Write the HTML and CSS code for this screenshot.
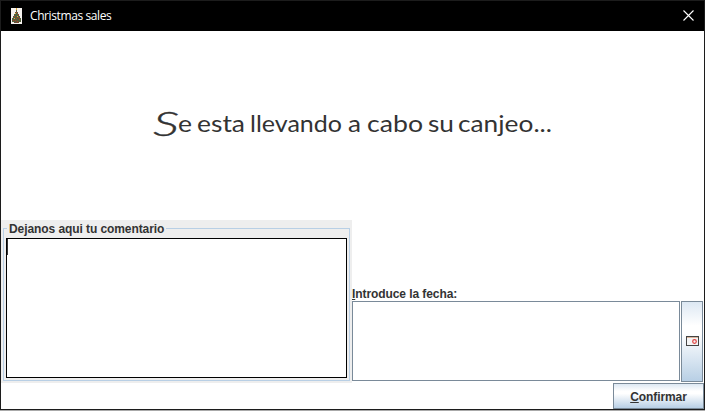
FILE: index.html
```html
<!DOCTYPE html>
<html lang="es">
<head>
<meta charset="utf-8">
<title>Christmas sales</title>
<link rel="stylesheet" href="styles.css">
</head>
<body>
<main class="window">
  <header class="titlebar">
    <svg class="tree" width="11" height="16" viewBox="0 0 11 16" shape-rendering="crispEdges">
      <path fill="#f6f3ef" d="M0 0h11v16H0z"/>
      <path fill="#53613d" d="M5 2h1v2h1v2h1v2h1v2h1v4H1v-4h1V8h1V6h1V4h1z"/>
      <path fill="#e3a83a" d="M5 0h1v2H5zM4 5h1v1H4zM6 8h1v1H6zM3 10h1v1H3z"/>
      <path fill="#b5362b" d="M5 4h1v1H5zM3 8h1v1H3zM7 6h1v1H7zM5 10h1v1H5zM8 11h1v1H8zM2 12h1v1H2zM6 13h1v1H6zM4 12h1v1H4zM7 9h1v1H7z"/>
      <path fill="#6c4a35" d="M3 14h5v1H3z"/>
    </svg>
    <span class="title">Christmas sales</span>
    <svg class="close" width="11" height="11" viewBox="0 0 11 11"><path d="M.5.5l10 10M10.5.5l-10 10" stroke="#fff" stroke-width="1.1"/></svg>
  </header>
  <section class="message">
    <svg width="703" height="189" viewBox="0 0 703 189">
      <text class="script" y="101"><tspan class="cap" x="152" y="105" textLength="26" lengthAdjust="spacingAndGlyphs">S</tspan><tspan x="177" y="101" textLength="14" lengthAdjust="spacingAndGlyphs">e</tspan> <tspan x="196" textLength="48" lengthAdjust="spacingAndGlyphs">esta</tspan> <tspan x="249" textLength="92" lengthAdjust="spacingAndGlyphs">llevando</tspan> <tspan x="347" textLength="13" lengthAdjust="spacingAndGlyphs">a</tspan> <tspan x="366" textLength="56" lengthAdjust="spacingAndGlyphs">cabo</tspan> <tspan x="427" textLength="26" lengthAdjust="spacingAndGlyphs">su</tspan> <tspan x="457" textLength="94" lengthAdjust="spacingAndGlyphs">canjeo...</tspan></text>
    </svg>
  </section>
  <section class="form">
    <fieldset class="comment">
      <legend>Dejanos aqui tu comentario</legend>
      <div class="textarea"><i class="caret"></i></div>
    </fieldset>
    <div class="date">
      <div class="label"><u>I</u>ntroduce la fecha:</div>
      <div class="picker">
        <div class="field"></div>
        <div class="pick">
          <svg width="13" height="10" viewBox="0 0 13 10">
            <path fill="#444" d="M0 0h13v10H0z"/><path fill="#f4f4f4" d="M1 2h11v7H1z"/><path fill="#d9b59d" d="M1 1h11v1H1z"/>
            <circle cx="8.5" cy="5.5" r="1.8" fill="none" stroke="#e04040" stroke-width="1.2"/>
          </svg>
        </div>
      </div>
    </div>
  </section>
  <footer class="actions"><div class="confirm"><span><u>C</u>onfirmar</span></div></footer>
</main>
</body>
</html>
```

FILE: styles.css
```css
* { box-sizing: border-box; }
body {
  margin: 0;
  width: 705px;
  height: 411px;
  overflow: hidden;
  background: #aaa;
  font: bold 12px/15px "Liberation Sans", Arial, sans-serif;
  letter-spacing: -0.08px;
  color: #333;
}
.window {
  width: 705px;
  height: 410px;
  border: 1px solid #1c1c1c;
  background: #fff;
  display: flex;
  flex-direction: column;
}
.titlebar {
  height: 30px;
  flex: none;
  background: #000;
  display: flex;
  align-items: center;
  padding: 0 10px;
}
.tree { margin-top: -1px; }
.title {
  color: #fff;
  font: 12px/16px "Open Sans", sans-serif;
  letter-spacing: -0.4px;
  margin-left: 8px;
}
.close { margin: -2px 0 0 auto; }
.message { height: 189px; flex: none; }
.message svg { display: block; }
.script {
  font: 22.5px Lato, sans-serif;
  letter-spacing: 0;
  fill: #333;
}
.cap { font-size: 33px; font-weight: 300; font-style: italic; stroke: #333; stroke-width: .4px; }
.form { display: flex; height: 163px; flex: none; }
.comment {
  width: 351px;
  height: 163px;
  margin: 0;
  padding: 0;
  border: 0 solid #eee;
  background: #eee;
  display: grid;
  position: relative;
}
.comment::before {
  content: "";
  position: absolute;
  inset: 8px 2px 2px;
  border: 1px solid #b8cfe5;
}
.comment legend {
  position: absolute;
  left: 6px;
  top: 2px;
  padding: 0 2px;
  background: #eee;
  white-space: nowrap;
}
.textarea {
  margin: 18px 5px 5px 5px;
  border: 1px solid #000;
  background: #fff;
}
.caret {
  display: block;
  width: 1px;
  height: 16px;
  background: #333;
}
.date {
  width: 352px;
  display: flex;
  flex-direction: column;
  padding-top: 67px;
}
.label { height: 14px; }
u { text-underline-offset: 1px; text-decoration-thickness: 1px; }
.picker { display: flex; height: 81px; gap: 1px; }
.field {
  width: 328px;
  height: 80px;
  border: 1px solid #7a8a99;
}
.pick, .confirm {
  border: 1px solid #7a8a99;
  background: linear-gradient(#dde8f3 0%, #fff 30%, #fff 40%, #b8cfe5 100%);
  display: flex;
  align-items: center;
  justify-content: center;
}
.pick { width: 22px; padding-bottom: 1px; }
.actions {
  display: flex;
  justify-content: flex-end;
  height: 26px;
}
.confirm { width: 91px; padding-top: 2px; }
```
